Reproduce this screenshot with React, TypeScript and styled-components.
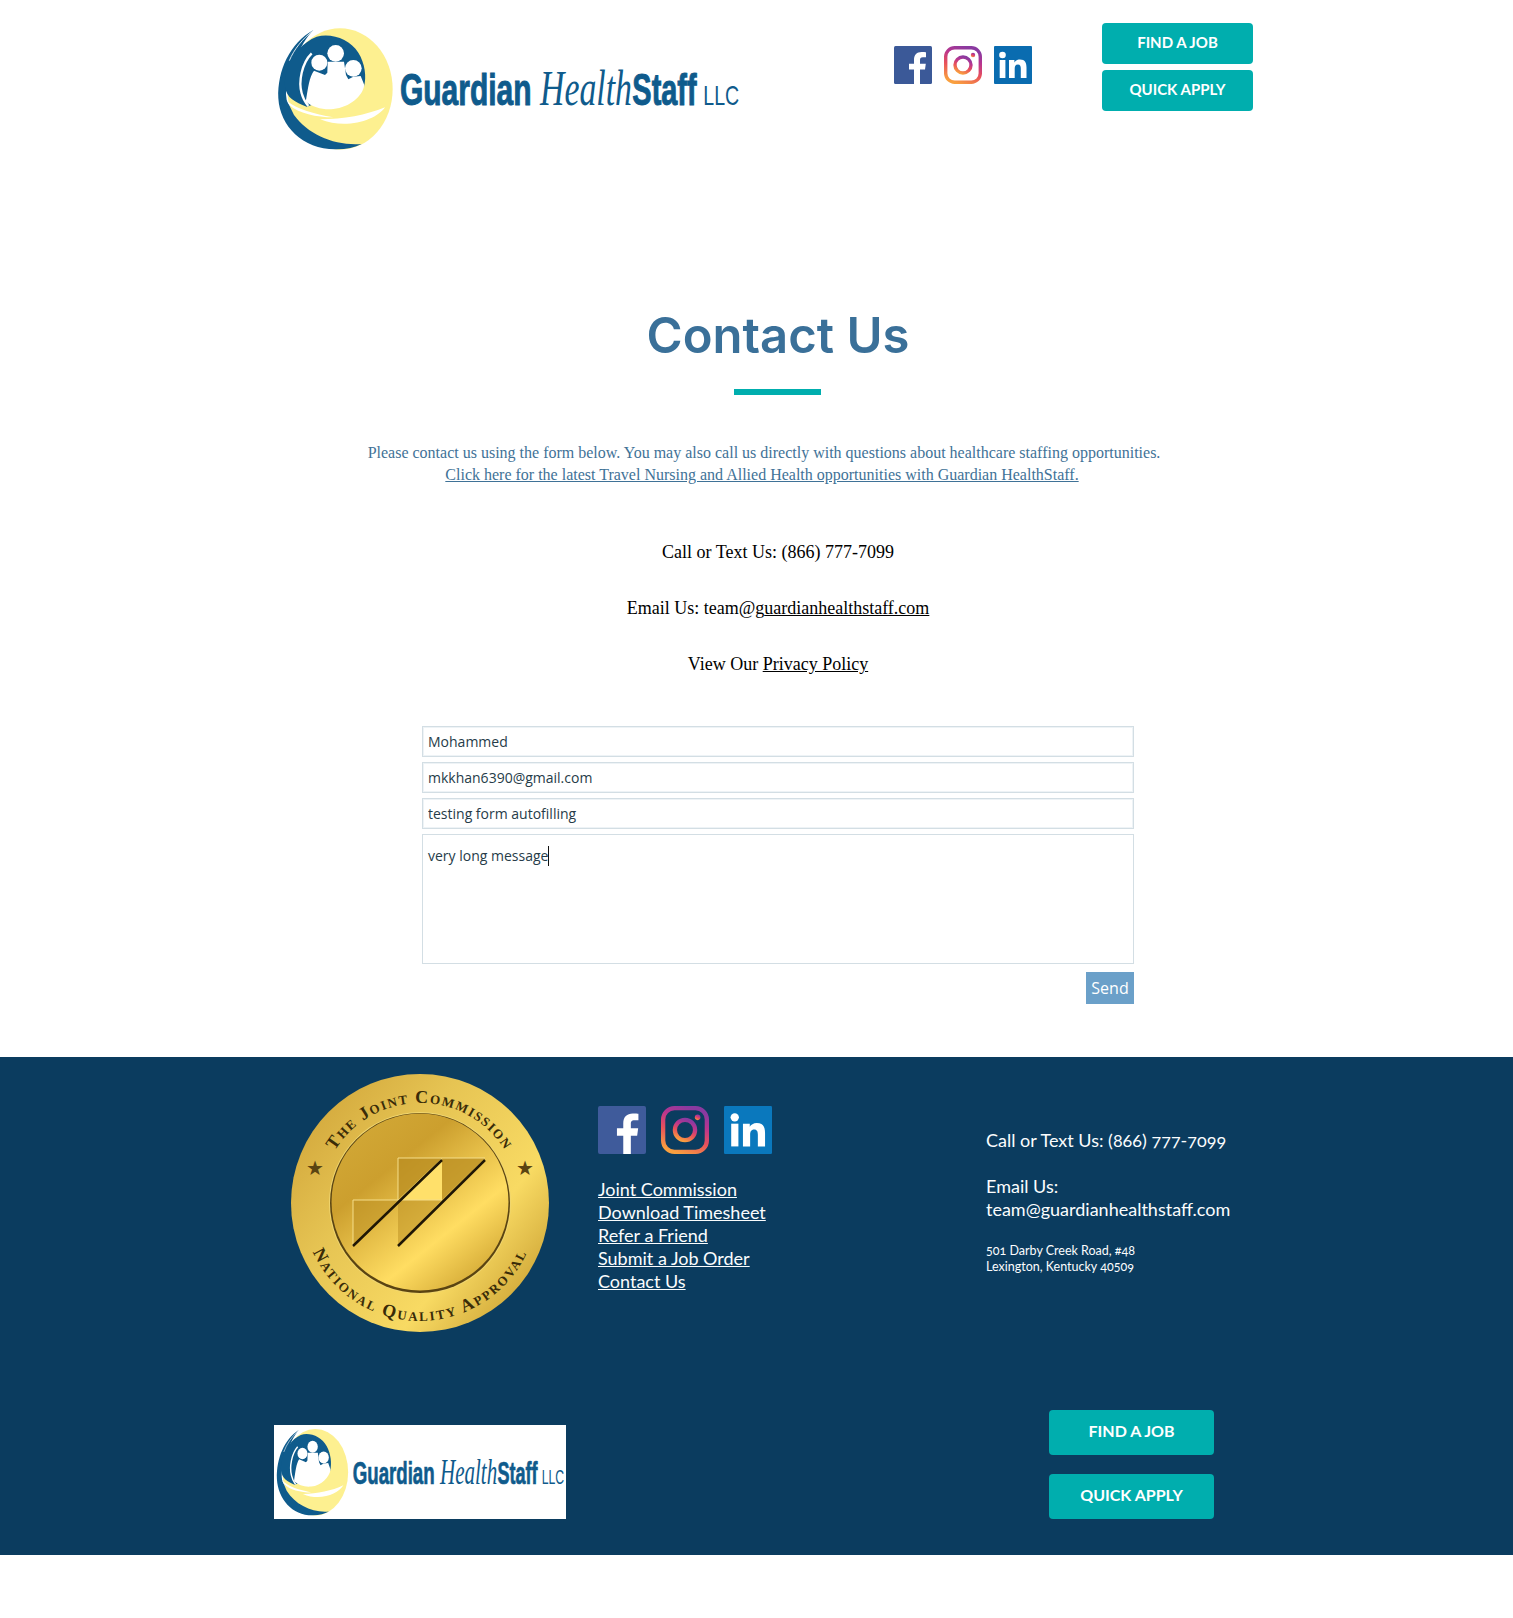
import React from "react";
import styled, { createGlobalStyle } from "styled-components";

const Global = createGlobalStyle`
  html, body { margin: 0; padding: 0; background: #fff; }
  * { box-sizing: border-box; }
`;

const Page = styled.div`
  width: 1513px;
  height: 1618px;
  overflow: hidden;
`;

const Header = styled.header`
  height: 240px;
  padding: 23px 260px 0 277px;
  display: flex;
  align-items: flex-start;
`;

const HeaderLogo = styled.div`
  width: 500px;
  height: 170px;
  margin: -23px 0 0 -17px;
`;

const HeaderSocial = styled.div`
  margin: 23px 0 0 134px;
  display: flex;
  gap: 12px;
`;

const ButtonStack = styled.div`
  margin-left: 70px;
  display: flex;
  flex-direction: column;
  gap: 6px;
`;

const CtaButton = styled.a<{ $large?: boolean }>`
  display: flex;
  align-items: center;
  justify-content: center;
  width: ${(p) => (p.$large ? "165px" : "151px")};
  height: ${(p) => (p.$large ? "45px" : "41px")};
  padding-bottom: ${(p) => (p.$large ? "5px" : "3px")};
  background: #00aeae;
  border-radius: 4px;
  color: #fff;
  font-family: Lato, sans-serif;
  font-weight: 700;
  font-size: ${(p) => (p.$large ? "16px" : "15px")};
`;

const Main = styled.main`
  height: 817px;
  padding-left: 43px;
  display: flex;
  flex-direction: column;
  align-items: center;
`;

const Title = styled.h1`
  margin: 62px 0 0;
  height: 68px;
  line-height: 68px;
  font-family: Inter, sans-serif;
  font-weight: 600;
  font-size: 49px;
  color: #3a7099;
`;

const TitleRule = styled.div`
  margin: 19px 1px 0 0;
  width: 87px;
  height: 6px;
  background: #00aeae;
`;

const Intro = styled.p`
  margin: 47px 28px 0 0;
  font-family: "Liberation Serif", serif;
  font-size: 16px;
  line-height: 22px;
  color: #3f7297;
  text-align: center;
  a { color: inherit; text-decoration: underline; margin-right: 4px; }
`;

const ContactLines = styled.div`
  margin-top: 56px;
  display: flex;
  flex-direction: column;
  gap: 35px;
`;

const ContactLine = styled.p`
  margin: 0;
  font-family: "Liberation Serif", serif;
  font-size: 18px;
  line-height: 21px;
  color: #000;
  text-align: center;
  a { color: inherit; text-decoration: underline; }
`;

const Form = styled.form`
  position: relative;
  margin-top: 51px;
  width: 712px;
  display: flex;
  flex-direction: column;
  gap: 5px;
`;

const Field = styled.input`
  width: 100%;
  height: 31px;
  padding: 0 5px;
  border: 1px solid #d3dee4;
  box-shadow: inset 0 0 0 1px #eef3f6;
  outline: none;
  font-family: "Open Sans", sans-serif;
  font-size: 14px;
  color: #263c49;
`;

const Message = styled.textarea`
  width: 100%;
  height: 130px;
  padding: 11px 5px;
  border: 1px solid #d3dee4;
  outline: none;
  resize: none;
  font-family: "Open Sans", sans-serif;
  font-size: 14px;
  line-height: 20px;
  color: #263c49;
`;

const Caret = styled.span`
  position: absolute;
  left: 126px;
  top: 120px;
  width: 1px;
  height: 20px;
  background: #111;
`;

const SendRow = styled.div`
  margin-top: 3px;
  display: flex;
  justify-content: flex-end;
`;

const SendButton = styled.button`
  width: 48px;
  height: 32px;
  padding: 0;
  border: none;
  background: #6ba0c9;
  color: #fff;
  font-family: "Open Sans", sans-serif;
  font-size: 16px;
`;

const Footer = styled.footer`
  height: 498px;
  background: #0b3c5f;
  padding: 16px 299px 0 274px;
  color: #fbfdfe;
  font-family: Lato, sans-serif;
  font-variant-numeric: oldstyle-nums;
`;

const FooterTop = styled.div`
  display: flex;
  height: 352px;
`;

const BadgeSlot = styled.div`
  flex: none;
  width: 324px;
  padding-left: 16px;
`;

const LinksColumn = styled.div`
  flex: none;
  width: 388px;
  padding-top: 33px;
`;

const FooterSocial = styled.div`
  display: flex;
  gap: 15px;
  margin-bottom: 24px;
`;

const FooterLink = styled.a`
  display: block;
  font-size: 18px;
  line-height: 23px;
  color: inherit;
  text-decoration: underline;
`;

const InfoColumn = styled.div`
  flex: none;
  padding-top: 56px;
  white-space: nowrap;
`;

const InfoLine = styled.div`
  font-size: 18px;
  line-height: 23px;
`;

const InfoGap = styled.div`
  height: 23px;
`;

const Address = styled.div`
  margin-top: 22px;
  font-size: 12.5px;
  line-height: 16px;
`;

const FooterBottom = styled.div`
  display: flex;
  justify-content: space-between;
  align-items: flex-end;
`;

const FooterLogo = styled.div`
  width: 292px;
  height: 94px;
  background: #fff;
`;

const FooterButtons = styled.div`
  display: flex;
  flex-direction: column;
  gap: 19px;
  margin-top: -15px;
`;

const LOGO_BLUE = "#0f5b8c";
const YELLOW = "#fdf090";

function LogoMark() {
  return (
    <g transform="translate(30 60)">
      <ellipse cx="210" cy="207" rx="158" ry="182" fill={YELLOW} />
      <path
        d="M130 30C60 70 22 150 25 235C30 320 100 390 200 388C230 388 255 382 275 372C195 378 115 345 72 285L50 240C43 200 55 150 75 120C90 85 110 50 130 30Z"
        fill={LOGO_BLUE}
      />
      <path
        d="M140 50C185 38 240 58 265 98C285 130 290 170 282 200L110 260C75 245 50 235 45 200C42 170 55 125 85 90C100 72 120 58 140 50Z"
        fill={LOGO_BLUE}
      />
      <path d="M128 33C98 56 72 88 58 122" fill="none" stroke="#fff" strokeWidth="2.500" />
      <path d="M125 100C95 130 85 185 95 220C100 240 108 250 115 258" fill="none" stroke="#fff" strokeWidth="7" />
      <path
        d="M108 240C114 205 118 170 132 152L165 165L172 158L173 125L222 125L228 165L235 178L250 170L272 168L283 195C278 228 240 262 190 267C160 270 128 262 108 245Z"
        fill="#fff"
      />
      <circle cx="148" cy="128" r="24" fill="#fff" />
      <circle cx="197" cy="100" r="25" fill="#fff" />
      <circle cx="250" cy="145" r="25" fill="#fff" />
      <path d="M50 242C85 270 130 280 190 292C140 292 85 280 58 255Z" fill="#fff" />
      <path d="M150 298C220 298 290 285 345 262C320 300 230 330 150 298Z" fill="#fff" />
    </g>
  );
}

function Logo({ viewBox, stretch }: { viewBox: string; stretch?: boolean }) {
  return (
    <svg
      width="100%"
      height="100%"
      viewBox={viewBox}
      preserveAspectRatio={stretch ? "none" : "xMidYMid meet"}
      style={{ display: "block" }}
    >
      <LogoMark />
      <g fill={LOGO_BLUE}>
        <text transform="translate(420 315) scale(0.666 1)" fontFamily="Liberation Sans" fontWeight="700" fontSize="135" stroke={LOGO_BLUE} strokeWidth="3">
          Guardian
        </text>
        <text transform="translate(840 315) scale(0.676 1)" fontFamily="Liberation Serif" fontStyle="italic" fontSize="150">
          Health
        </text>
        <text transform="translate(1117 315) scale(0.643 1)" fontFamily="Liberation Sans" fontWeight="700" fontSize="135" stroke={LOGO_BLUE} strokeWidth="3">
          Staff
        </text>
        <text transform="translate(1330 315) scale(0.7 1)" fontFamily="Liberation Sans" fontSize="84">
          LLC
        </text>
      </g>
    </svg>
  );
}

function FacebookIcon({ size, fill }: { size: number; fill: string }) {
  return (
    <svg width={size} height={size} viewBox="0 0 38 38">
      <rect width="38" height="38" rx="1.5" fill={fill} />
      <path
        d="M26 38V23.5h5l.8-5.800H26v-3.600c0-1.700.5-2.800 2.900-2.800H32V6.200c-.6-.1-2.400-.2-4.500-.2-4.500 0-7.500 2.700-7.500 7.700v4H15v5.800h5V38Z"
        fill="#fff"
      />
    </svg>
  );
}

function InstagramIcon({ size, id }: { size: number; id: string }) {
  return (
    <svg width={size} height={size} viewBox="0 0 38 38">
      <defs>
        <linearGradient id={id} x1="0.25" y1="1" x2="0.65" y2="0">
          <stop offset="0" stopColor="#f9a03f" />
          <stop offset="0.4" stopColor="#e8505b" />
          <stop offset="0.72" stopColor="#b9358f" />
          <stop offset="1" stopColor="#8a3aa0" />
        </linearGradient>
      </defs>
      <rect x="1.700" y="1.700" width="34.600" height="34.600" rx="9" fill="none" stroke={`url(#${id})`} strokeWidth="3.400" />
      <circle cx="19" cy="19" r="8" fill="none" stroke={`url(#${id})`} strokeWidth="3.400" />
      <circle cx="29" cy="9" r="2.200" fill={`url(#${id})`} />
    </svg>
  );
}

function LinkedinIcon({ size, fill }: { size: number; fill: string }) {
  return (
    <svg width={size} height={size} viewBox="0 0 38 38">
      <rect width="38" height="38" rx="1" fill={fill} />
      <circle cx="8.500" cy="9" r="3.300" fill="#fff" />
      <rect x="5.700" y="14" width="5.700" height="18" fill="#fff" />
      <path
        d="M15 14h5.400v2.500c.9-1.600 2.900-3 5.500-3 5.300 0 6.600 3.300 6.600 8V32h-5.700v-9.200c0-2.300-.5-4.200-2.900-4.200-2.500 0-3.200 1.900-3.200 4.200V32H15Z"
        fill="#fff"
      />
    </svg>
  );
}

function JointCommissionBadge() {
  return (
    <svg width="260" height="260" viewBox="0 0 260 260" style={{ display: "block" }}>
      <defs>
        <linearGradient id="rimGold" x1="0" y1="0.1" x2="1" y2="0.9">
          <stop offset="0" stopColor="#cfa338" />
          <stop offset="0.35" stopColor="#e6c453" />
          <stop offset="0.7" stopColor="#f8da63" />
          <stop offset="1" stopColor="#c4982b" />
        </linearGradient>
        <linearGradient id="faceGold" x1="0.1" y1="0" x2="0.9" y2="1">
          <stop offset="0" stopColor="#d3aa38" />
          <stop offset="0.3" stopColor="#cc9f2e" />
          <stop offset="0.68" stopColor="#ffdd62" />
          <stop offset="1" stopColor="#c99c2a" />
        </linearGradient>
        <path id="topArc" d="M30 130A100 100 0 0 1 230 130" fill="none" />
        <path id="bottomArc" d="M12 130A118 118 0 0 0 248 130" fill="none" />
      </defs>
      <circle cx="130" cy="130" r="129" fill="url(#rimGold)" />
      <circle cx="130" cy="130" r="91" fill="#f0d670" />
      <circle cx="130" cy="130" r="90" fill="#5a4412" />
      <circle cx="130" cy="129" r="88.500" fill="url(#faceGold)" />
      <path d="M108 85H152L108 127Z" fill="#b98d22" opacity="0.75" />
      <path d="M152 85H195L152 127Z" fill="#b98d22" opacity="0.75" />
      <path d="M63 127H108L63 173Z" fill="#b98d22" opacity="0.5" />
      <path d="M108 127H152L108 173Z" fill="#b98d22" opacity="0.5" />
      <path d="M152 85V127H108Z" fill="#ffe06a" />
      <path d="M108 85H195M63 127H152M108 85V127M63 127V173" fill="none" stroke="#f5de8a" strokeWidth="1" />
      <path d="M152 87L63 173M195 87L108 173" stroke="#1f1605" strokeWidth="2.500" />
      <g fontFamily="Liberation Serif, serif" fontWeight="700" fill="#3a2c08" fontVariant="small-caps">
        <text fontSize="18" textAnchor="middle" letterSpacing="1.500">
          <textPath href="#topArc" startOffset="50%">The Joint Commission</textPath>
        </text>
        <text fontSize="18" textAnchor="middle" letterSpacing="2">
          <textPath href="#bottomArc" startOffset="50%">National Quality Approval</textPath>
        </text>
      </g>
      <g fontSize="20" fill="#5a4412" fontFamily="DejaVu Sans, sans-serif" textAnchor="middle">
        <text x="25" y="102">★</text>
        <text x="235" y="102">★</text>
      </g>
    </svg>
  );
}

function App() {
  return (
    <Page>
      <Global />
      <Header>
        <HeaderLogo>
          <Logo viewBox="0 0 1500 510" />
        </HeaderLogo>
        <HeaderSocial>
          <FacebookIcon size={38} fill="#3b5998" />
          <InstagramIcon size={38} id="igHead" />
          <LinkedinIcon size={38} fill="#0a6cb0" />
        </HeaderSocial>
        <ButtonStack>
          <CtaButton>FIND A JOB</CtaButton>
          <CtaButton>QUICK APPLY</CtaButton>
        </ButtonStack>
      </Header>
      <Main>
        <Title>Contact Us</Title>
        <TitleRule />
        <Intro>
          Please contact us using the form below. You may also call us directly with questions about healthcare staffing opportunities.
          <br />
          <a>Click here for the latest Travel Nursing and Allied Health opportunities with Guardian HealthStaff.</a>
        </Intro>
        <ContactLines>
          <ContactLine>Call or Text Us: (866) 777-7099</ContactLine>
          <ContactLine>
            Email Us: team@g<a>uardianhealthstaff.com</a>
          </ContactLine>
          <ContactLine>
            View Our <a>Privacy Policy</a>
          </ContactLine>
        </ContactLines>
        <Form>
          <Field readOnly value="Mohammed" />
          <Field readOnly value="mkkhan6390@gmail.com" />
          <Field readOnly value="testing form autofilling" />
          <Message readOnly value="very long message" />
          <Caret />
          <SendRow>
            <SendButton type="button">Send</SendButton>
          </SendRow>
        </Form>
      </Main>
      <Footer>
        <FooterTop>
          <BadgeSlot>
            <JointCommissionBadge />
          </BadgeSlot>
          <LinksColumn>
            <FooterSocial>
              <FacebookIcon size={48} fill="#3f5b9b" />
              <InstagramIcon size={48} id="igFoot" />
              <LinkedinIcon size={48} fill="#0a78bd" />
            </FooterSocial>
            <FooterLink>Joint Commission</FooterLink>
            <FooterLink>Download Timesheet</FooterLink>
            <FooterLink>Refer a Friend</FooterLink>
            <FooterLink>Submit a Job Order</FooterLink>
            <FooterLink>Contact Us</FooterLink>
          </LinksColumn>
          <InfoColumn>
            <InfoLine>Call or Text Us: (866) 777-7099</InfoLine>
            <InfoGap />
            <InfoLine>Email Us:</InfoLine>
            <InfoLine>team@guardianhealthstaff.com</InfoLine>
            <Address>
              501 Darby Creek Road, #48
              <br />
              Lexington, Kentucky 40509
            </Address>
          </InfoColumn>
        </FooterTop>
        <FooterBottom>
          <FooterLogo>
            <Logo viewBox="41 68.500 1406 395" stretch />
          </FooterLogo>
          <FooterButtons>
            <CtaButton $large>FIND A JOB</CtaButton>
            <CtaButton $large>QUICK APPLY</CtaButton>
          </FooterButtons>
        </FooterBottom>
      </Footer>
    </Page>
  );
}

export default App;
